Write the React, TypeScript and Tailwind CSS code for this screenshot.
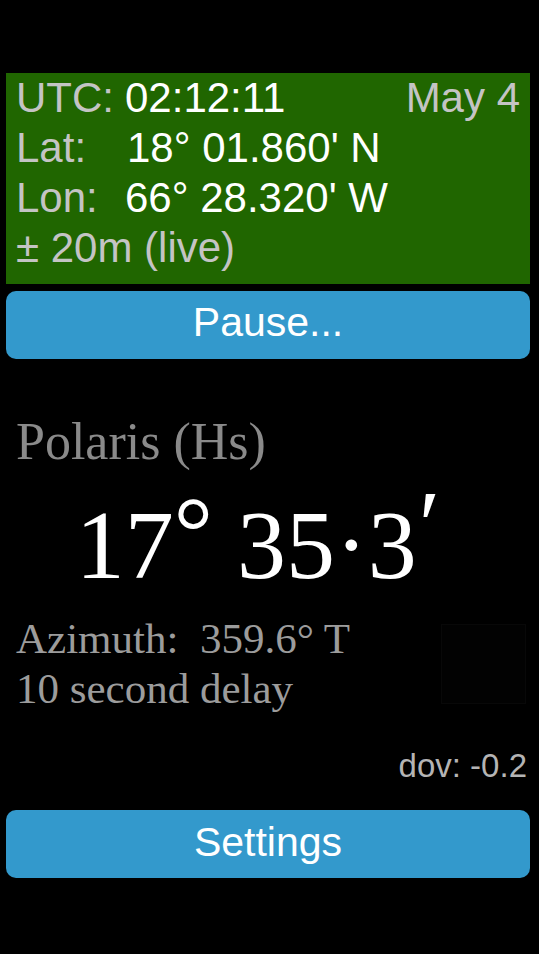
export default function App() {
  const sans = { fontFamily: '"Liberation Sans", Arial, sans-serif' };
  const serif = { fontFamily: '"Liberation Serif", "Times New Roman", serif' };
  return (
    <div className="min-h-[954px] w-[539px] bg-black pl-[6px] pr-[9px] pt-[73px]">
      <div className="bg-[#206600] pl-[10px] pr-[10px] pb-[11px] text-[42px] leading-[50px] text-[#c4c4c4]" style={sans}>
        <div className="flex justify-between">
          <div className="flex">
            <span className="w-[109px]">UTC:</span>
            <span className="text-white">02:12:11</span>
          </div>
          <span>May 4</span>
        </div>
        <div className="flex">
          <span className="w-[111px]">Lat:</span>
          <span className="text-white">18° 01.860' N</span>
        </div>
        <div className="flex">
          <span className="w-[109px]">Lon:</span>
          <span className="text-white">66° 28.320' W</span>
        </div>
        <div>± 20m (live)</div>
      </div>

      <button className="mt-[7px] flex h-[68px] w-full items-center justify-center rounded-[10px] bg-[#3399cc] pb-[4px] text-[41px] text-white" style={sans}>
        Pause...
      </button>

      <div className="mt-[55px] pl-[10px] text-[52px] leading-[56px] text-[#8a8a8a]" style={serif}>
        Polaris (Hs)
      </div>

      <div className="mt-[25px] flex justify-center pr-[20px] text-[98px] leading-[100px] text-white" style={serif}>
        <span>17</span>
        <span className="relative -top-[14px]">°</span>
        <span className="ml-[24px]">35·3</span>
        <span className="relative -top-[20px] ml-[2px]">′</span>
      </div>

      <div className="mt-[19px] flex items-start justify-between pl-[10px]">
        <div className="text-[43px] leading-[50px] text-[#9c9c9c]" style={serif}>
          <div>Azimuth:&nbsp; 359.6° T</div>
          <div>10 second delay</div>
        </div>
        <div className="mr-[4px] mt-[10px] h-[80px] w-[85px] border border-[#080808] bg-[#020202]" />
      </div>

      <div className="mt-[32px] mr-[3px] text-right text-[33px] leading-[40px] text-[#b4b4b4]" style={sans}>
        dov: -0.2
      </div>

      <button className="mt-[24px] flex h-[68px] w-full items-center justify-center rounded-[10px] bg-[#3399cc] pb-[2px] text-[41px] text-white" style={sans}>
        Settings
      </button>
    </div>
  );
}
